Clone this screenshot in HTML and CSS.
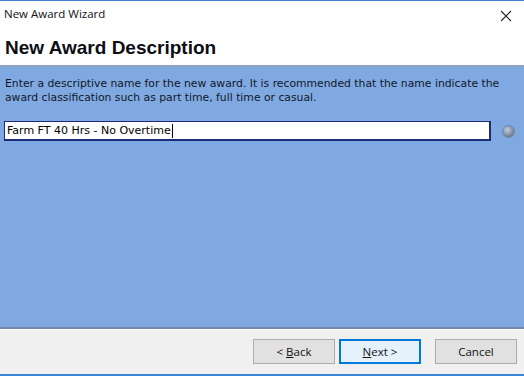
FILE: index.html
```html
<!DOCTYPE html>
<html>
<head>
<meta charset="utf-8">
<link rel="stylesheet" href="styles.css">
</head>
<body>
<div class="window">
  <div class="titlebar">
    <span class="title">New Award Wizard</span>
    <svg class="close" width="12" height="12" viewBox="0 0 12 12"><path d="M1 1L11 11M11 1L1 11" stroke="#222" stroke-width="1.1"/></svg>
  </div>
  <div class="header">
    <h1 class="heading">New Award Description</h1>
  </div>
  <div class="panel">
    <p class="desc">Enter a descriptive name for the new award. It is recommended that the name indicate the award classification such as part time, full time or casual.</p>
    <div class="field-row">
      <div class="input">Farm FT 40 Hrs - No Overtime<span class="caret"></span></div>
      <span class="led"></span>
    </div>
  </div>
  <div class="footer">
    <button class="btn"><span>&lt; <u>B</u>ack</span></button>
    <button class="btn primary"><span><u>N</u>ext &gt;</span></button>
    <button class="btn cancel"><span>Cancel</span></button>
  </div>
</div>
</body>
</html>
```
FILE: styles.css
```css
html, body {
  margin: 0;
  padding: 0;
  width: 524px;
  height: 376px;
  overflow: hidden;
  background: #ffffff;
}
.window {
  display: flex;
  flex-direction: column;
  height: 376px;
  box-sizing: border-box;
  border-top: 1px solid #3f7fcf;
  border-bottom: 2px solid #3a86d4;
  font-family: "Liberation Sans", Arial, sans-serif;
}
.titlebar {
  height: 27px;
  display: flex;
  align-items: center;
  justify-content: space-between;
  padding: 0 12px 0 4px;
  background: #ffffff;
}
.title {
  font-family: "Open Sans", "Liberation Sans", sans-serif;
  font-size: 11.5px;
  color: #111;
  margin-top: -2px;
}
.close {
  margin-top: 2px;
}
.header {
  height: 37px;
  background: #ffffff;
  border-bottom: 2px solid #8ea3c6;
  display: flex;
  align-items: center;
  padding-left: 5px;
}
.heading {
  margin: 0;
  font-family: "Liberation Sans", Arial, sans-serif;
  font-weight: bold;
  font-size: 19px;
  color: #0d0d14;
  margin-top: 2px;
}
.panel {
  flex: 1;
  background: #80a9e1;
  padding: 10px 8px 0 5px;
  border-bottom: 2px solid #7589a8;
}
.desc {
  margin: 0;
  font-family: "DejaVu Sans", Tahoma, sans-serif;
  font-size: 10.8px;
  line-height: 14px;
  color: #10182a;
}
.field-row {
  display: flex;
  align-items: center;
  margin-top: 16px;
  margin-left: -1px;
}
.input {
  width: 482px;
  height: 17px;
  border: 2px solid #1c2a7a;
  border-width: 1px 2px 2px 1px;
  background: #ffffff;
  font-family: "DejaVu Sans", Tahoma, sans-serif;
  font-size: 11px;
  line-height: 17px;
  padding-left: 2px;
  color: #000;
  display: flex;
  align-items: center;
}
.caret {
  display: inline-block;
  width: 1px;
  height: 14px;
  background: #000;
  margin-left: 1px;
}
.led {
  width: 11px;
  height: 11px;
  border-radius: 50%;
  margin-left: 12px;
  background: radial-gradient(circle at 40% 35%, #c4cfdc 0%, #7f8fa3 55%, #4d5b6e 100%);
  box-shadow: 0 0 0 1px #6d86a8;
}
.footer {
  height: 43px;
  background: #f0f0f0;
  border-top: 1px solid #ffffff;
  display: flex;
  align-items: center;
  justify-content: flex-end;
  padding-right: 7px;
  padding-bottom: 1px;
}
.btn {
  width: 82px;
  height: 25px;
  box-sizing: border-box;
  border: 1px solid #adadad;
  background: #e1e1e1;
  font-family: "Open Sans", "Liberation Sans", sans-serif;
  font-size: 11.5px;
  color: #111;
  padding: 0;
  margin-left: 4px;
}
.btn.primary {
  border: 2px solid #0078d7;
  background: #e5f1fb;
}
.btn.cancel {
  margin-left: 14px;
}
```
